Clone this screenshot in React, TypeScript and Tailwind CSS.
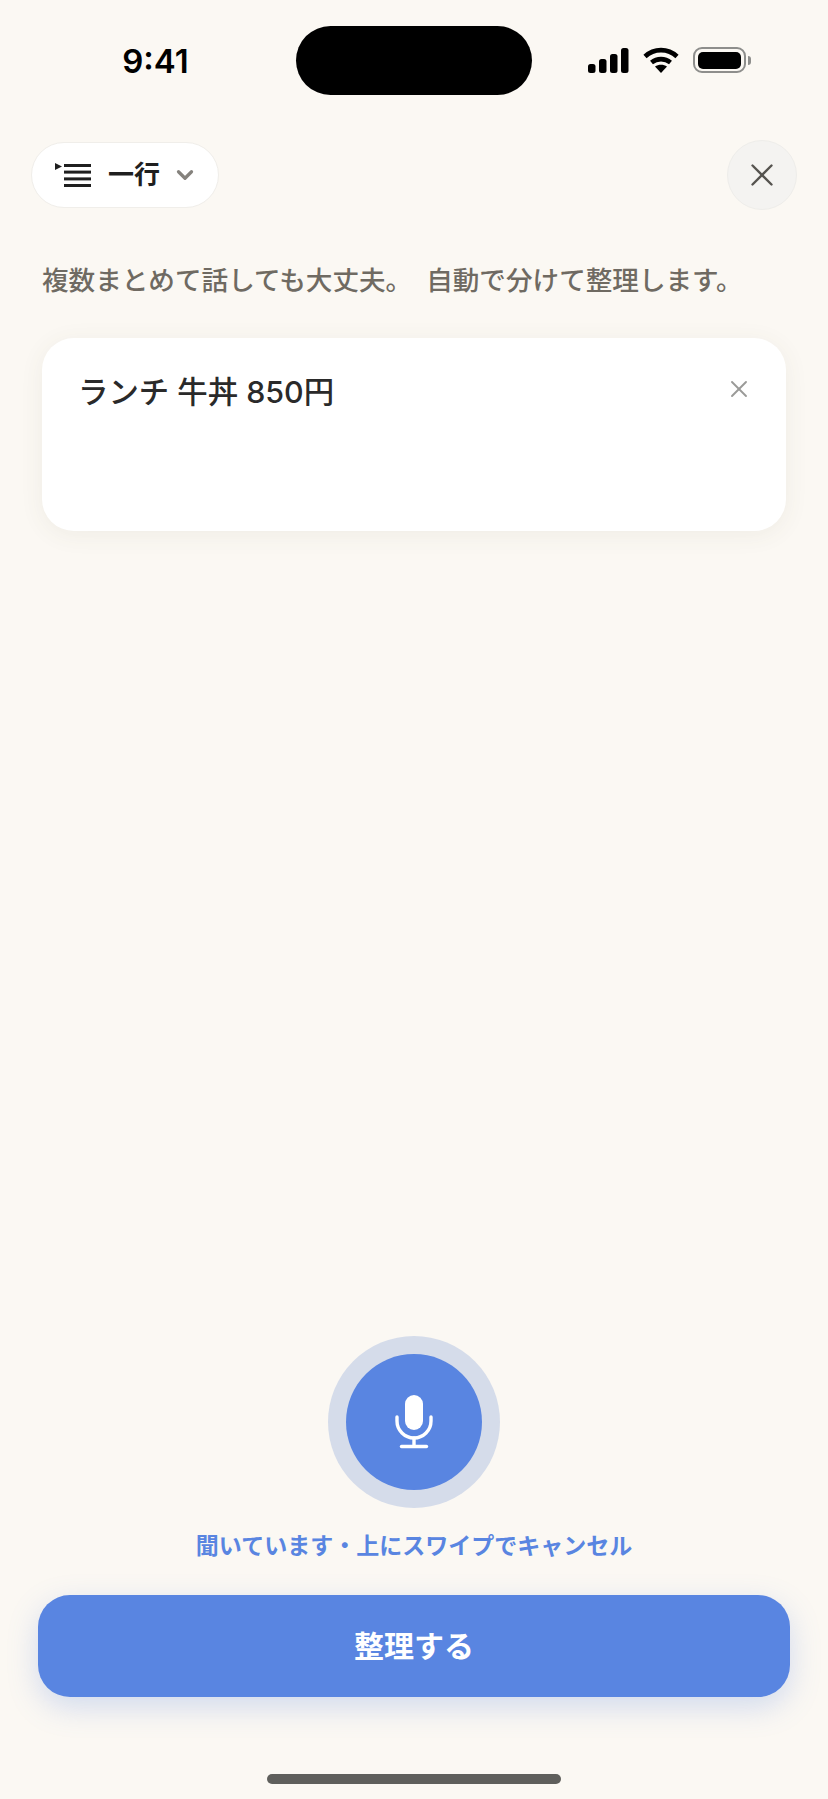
import { ChevronDown, X } from 'lucide-react';

function ModeIcon() {
  return (
    <svg width="37" height="24" viewBox="0 0 37 24" className="text-[#1f1f1f]" fill="currentColor">
      <path d="M0 0 L7 3.5 L0 7 Z" />
      <rect x="9" y="1" width="27" height="3" />
      <rect x="9" y="7.6" width="27" height="3" />
      <rect x="9" y="14.4" width="27" height="3" />
      <rect x="9" y="21" width="27" height="3" />
    </svg>
  );
}

function StatusIcons() {
  return (
    <div className="flex items-center">
      <svg width="41" height="25" viewBox="0 0 41 25" fill="#000">
        <rect x="0" y="16" width="7.5" height="9" rx="2.5" />
        <rect x="11" y="11" width="7.5" height="14" rx="2.5" />
        <rect x="22" y="6" width="7.5" height="19" rx="2.5" />
        <rect x="33" y="0" width="7.5" height="25" rx="2.5" />
      </svg>
      <svg width="36" height="26" viewBox="0 0 36 26" fill="none" stroke="#000" strokeWidth="4.6" className="ml-[14px]">
        <path d="M2 9.5 C11 1 25 1 34 9.5" />
        <path d="M8.5 15.5 C14 11 22 11 27.5 15.5" />
        <path d="M18 26 L12 19.5 C15.5 17 20.5 17 24 19.5 Z" fill="#000" stroke="none" />
      </svg>
      <div className="ml-[14px] flex items-center">
        <div className="flex h-[26px] w-[53px] items-center justify-center rounded-[9px] border-[2.5px] border-[#8e8e8c]">
          <div className="h-[17px] w-[43px] rounded-[5px] bg-black" />
        </div>
        <div className="ml-[2px] h-[9px] w-[3px] rounded-r-full bg-[#8e8e8c]" />
      </div>
    </div>
  );
}

function MicIcon() {
  return (
    <svg width="38" height="54" viewBox="0 0 38 54" fill="none" stroke="#fff" strokeWidth="3.4" strokeLinecap="round">
      <rect x="10" y="0" width="18" height="35" rx="9" fill="#fff" stroke="none" />
      <path d="M2 22 V26 A17 17 0 0 0 36 26 V22" />
      <path d="M19 43 V51" />
      <path d="M6.5 51.5 H31.5" />
    </svg>
  );
}

export default function App() {
  return (
    <div className="flex h-[1799px] w-full flex-col overflow-hidden bg-[#fbf8f3] font-['Inter','Noto_Sans_CJK_JP',sans-serif]">
      <div className="flex h-[95px] items-end">
        <div className="flex w-[296px] justify-center pb-[14px] pl-[15px]">
          <span className="text-[33px] leading-[40px] font-semibold text-black">9:41</span>
        </div>
        <div className="h-[69px] w-[236px] rounded-full bg-black" />
        <div className="flex flex-1 pb-[22px] pl-[56px]">
          <StatusIcons />
        </div>
      </div>

      <div className="mt-[45px] flex items-center justify-between pr-[31px] pl-[31px]">
        <button className="flex h-[66px] w-[188px] items-center rounded-full border border-[#f0eeea] bg-white pl-[23px]">
          <ModeIcon />
          <span className="ml-[16px] text-[26px] leading-none font-semibold text-[#1f1f1f]">一行</span>
          <ChevronDown className="ml-[12px] text-[#85827d]" size={26} strokeWidth={3} />
        </button>
        <button className="flex h-[70px] w-[70px] items-center justify-center rounded-full border border-[#eeedea] bg-[#f4f3f1]">
          <X className="text-[#55534f]" size={38} strokeWidth={1.5} />
        </button>
      </div>

      <p className="mt-[50px] pl-[42px] text-[26.6px] leading-[40px] font-medium whitespace-pre text-[#6f6a62]">
        複数まとめて話しても大丈夫。<span className="ml-[14px]">自動で分けて整理します。</span>
      </p>

      <div className="mx-[42px] mt-[38px] flex h-[193px] items-start justify-between rounded-[32px] bg-white pt-[32px] pr-[33px] pl-[36px] shadow-[0_4px_24px_rgba(90,80,60,0.07)]">
        <span className="text-[30.4px] leading-[44px] font-medium text-[#2a2a2a]">ランチ 牛丼 850円</span>
        <X className="mt-[5px] text-[#9a9a98]" size={28} strokeWidth={1.6} />
      </div>

      <div className="mt-auto flex flex-col items-center">
        <div className="flex h-[172px] w-[172px] items-center justify-center rounded-full bg-[#d5dcea]">
          <div className="flex h-[136px] w-[136px] items-center justify-center rounded-full bg-[#5985e1]">
            <MicIcon />
          </div>
        </div>
        <p className="mt-[21px] text-[23px] leading-[34px] font-semibold text-[#5985e1]">
          聞いています・上にスワイプでキャンセル
        </p>
        <button className="mt-[32px] flex h-[102px] w-[752px] items-center justify-center rounded-[32px] bg-[#5985e1] text-[30px] font-bold text-white shadow-[0_10px_30px_rgba(89,133,225,0.25)]">
          整理する
        </button>
        <div className="mt-[77px] mb-[15px] h-[10px] w-[294px] rounded-full bg-[#5f5f5c]" />
      </div>
    </div>
  );
}
